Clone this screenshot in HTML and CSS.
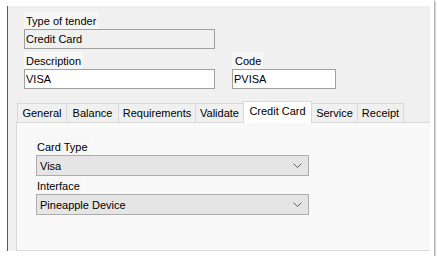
FILE: index.html
```html
<!DOCTYPE html>
<html>
<head>
<meta charset="utf-8">
<link rel="stylesheet" href="styles.css">
</head>
<body>
<div class="window">
  <div class="panel">
    <div class="field">
      <span class="label">Type of tender</span>
      <div class="input readonly w-wide">Credit Card</div>
    </div>
    <div class="row">
      <div class="field">
        <span class="label">Description</span>
        <div class="input w-wide">VISA</div>
      </div>
      <div class="field code">
        <span class="label">Code</span>
        <div class="input w-code">PVISA</div>
      </div>
    </div>
    <div class="tabs">
      <div class="tabstrip">
        <span class="tab t-general">General</span>
        <span class="tab t-balance">Balance</span>
        <span class="tab t-req">Requirements</span>
        <span class="tab t-validate">Validate</span>
        <span class="tab t-cc selected">Credit Card</span>
        <span class="tab t-service">Service</span>
        <span class="tab t-receipt">Receipt</span>
      </div>
      <div class="tabpage">
        <span class="label">Card Type</span>
        <div class="combo">
          <span>Visa</span>
          <svg class="chev" width="9" height="5" viewBox="0 0 9 5"><path d="M0.5 0.5 L4.5 4.5 L8.5 0.5" fill="none" stroke="#606060" stroke-width="1"/></svg>
        </div>
        <span class="label label-gap">Interface</span>
        <div class="combo">
          <span>Pineapple Device</span>
          <svg class="chev" width="9" height="5" viewBox="0 0 9 5"><path d="M0.5 0.5 L4.5 4.5 L8.5 0.5" fill="none" stroke="#606060" stroke-width="1"/></svg>
        </div>
      </div>
    </div>
  </div>
</div>
</body>
</html>
```
FILE: styles.css
```css
html, body {
  margin: 0;
  padding: 0;
  background: #ffffff;
}
body {
  font-family: "Liberation Sans", Arial, sans-serif;
  font-size: 11px;
  color: #000;
}
.window {
  box-sizing: border-box;
  width: 434px;
  height: 256px;
  padding: 6px 4px 5px 7px;
  background: #ffffff;
  box-shadow: 1px 1px 2px rgba(0, 0, 0, 0.45);
}
.panel {
  box-sizing: border-box;
  height: 100%;
  border-left: 1px solid #5c5c5c;
  background: #f0f0f0;
  padding: 6px 0 0 16px;
  overflow: hidden;
  display: flex;
  flex-direction: column;
  align-items: flex-start;
}
.field {
  display: flex;
  flex-direction: column;
  align-items: flex-start;
}
.label {
  display: block;
  height: 17px;
  line-height: 18px;
  padding: 0 2px 0 2px;
  background: #f7f7f7;
  white-space: nowrap;
}
.row {
  display: flex;
  gap: 17px;
  margin-top: 3px;
}
.code .label {
  padding-left: 3px;
}
.input {
  box-sizing: border-box;
  height: 20px;
  line-height: 18px;
  border: 1px solid #a0a0a0;
  background: #ffffff;
  padding-left: 1px;
  white-space: nowrap;
}
.input.readonly {
  background: #f0f0f0;
}
.w-wide { width: 191px; }
.w-code { width: 104px; }

.tabs {
  margin-top: 12px;
  margin-left: -8px;
  width: 420px;
  display: flex;
  flex-direction: column;
  flex: 1;
}
.tabstrip {
  display: flex;
  align-items: flex-end;
  height: 21px;
  padding-left: 1px;
}
.tab {
  box-sizing: border-box;
  height: 19px;
  line-height: 18px;
  border: 1px solid #d9d9d9;
  border-bottom: none;
  background: #f0f0f0;
  text-align: center;
  margin-left: -1px;
  white-space: nowrap;
}
.tab:first-child { margin-left: 0; }
.tab.selected {
  height: 21px;
  line-height: 19px;
  background: #ffffff;
  position: relative;
  z-index: 1;
  margin-bottom: -1px;
  height: 22px;
}
.t-general { width: 50px; }
.t-balance { width: 53px; }
.t-req { width: 78px; }
.t-validate { width: 49px; }
.t-cc { width: 69px; }
.t-service { width: 47px; }
.t-receipt { width: 47px; }

.tabpage {
  flex: 1;
  border: 1px solid #d9d9d9;
  background: #f9f9f9;
  padding: 15px 0 0 19px;
  display: flex;
  flex-direction: column;
  align-items: flex-start;
}
.tabpage .label {
  padding-left: 2px;
  margin-left: -1px;
}
.label-gap {
  margin-top: 1px;
}
.combo {
  box-sizing: border-box;
  width: 273px;
  height: 21px;
  border: 1px solid #adadad;
  background: #e5e5e5;
  padding: 0 6px 0 3px;
  display: flex;
  align-items: center;
  justify-content: space-between;
  white-space: nowrap;
}
.chev {
  display: block;
}
```
